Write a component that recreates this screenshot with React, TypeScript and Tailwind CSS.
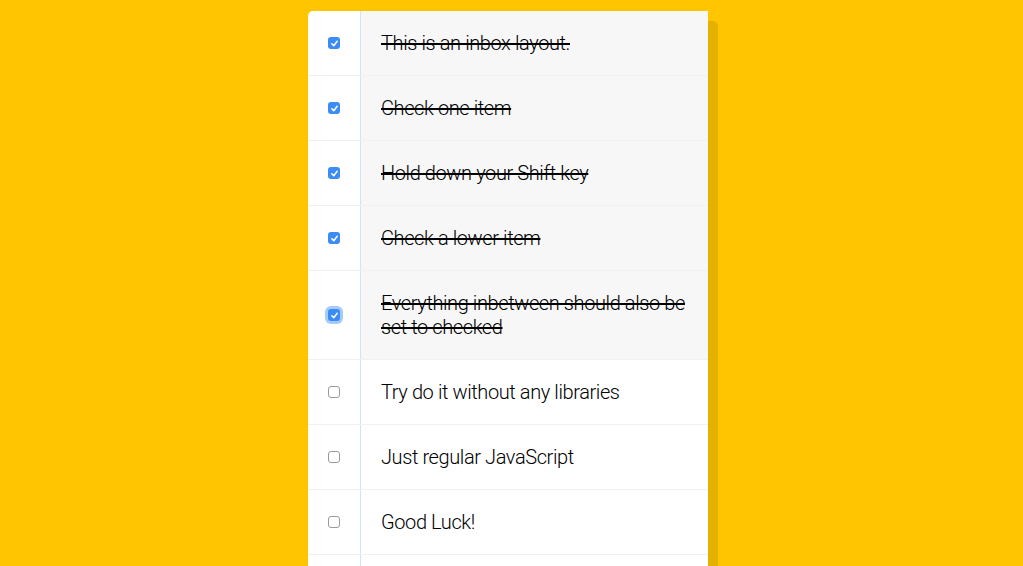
import React from "react";

const items: { text: string; checked: boolean; focus?: boolean }[] = [
  { text: "This is an inbox layout.", checked: true },
  { text: "Check one item", checked: true },
  { text: "Hold down your Shift key", checked: true },
  { text: "Check a lower item", checked: true },
  { text: "Everything inbetween should also be set to checked", checked: true, focus: true },
  { text: "Try do it without any libraries", checked: false },
  { text: "Just regular JavaScript", checked: false },
  { text: "Good Luck!", checked: false },
  { text: "", checked: false },
];

function Box({ checked, focus }: { checked: boolean; focus?: boolean }) {
  return (
    <span
      className={
        "m-5 flex h-[12px] w-[12px] shrink-0 items-center justify-center rounded-[3px] " +
        (checked ? "bg-[#3b8cf7] " : "border border-[#9a9a9a] bg-white ") +
        (focus ? "shadow-[0_0_0_3px_rgba(90,160,250,0.55)]" : "")
      }
    >
      {checked && (
        <svg width="9" height="9" viewBox="0 0 10 10" fill="none">
          <path d="M2 5.3 L4.2 7.4 L8 2.6" stroke="white" strokeWidth="1.7" strokeLinecap="round" strokeLinejoin="round" />
        </svg>
      )}
    </span>
  );
}

export default function App() {
  return (
    <div className="h-[566px] overflow-hidden bg-[#ffc600] pt-[11px]">
      <div className="ml-[308px] w-[400px] rounded-[5px] bg-white shadow-[10px_10px_0_rgba(0,0,0,0.1)]">
        {items.map((it, i) => (
          <div
            key={i}
            className={"flex items-center " + (i < items.length - 1 ? "border-b border-[#f1f1f1]" : "")}
          >
            <Box checked={it.checked} focus={it.focus} />
            <p
              className={
                "m-0 min-h-[64px] flex-1 border-l border-[#d1e2ff] p-5 text-[20px] leading-[24px] font-light tracking-[-0.4px] text-black " +
                (it.checked ? "bg-[#f7f7f7] line-through" : "")
              }
              style={{ fontFamily: "Roboto, 'Liberation Sans', sans-serif" }}
            >
              {it.text}
            </p>
          </div>
        ))}
      </div>
    </div>
  );
}
